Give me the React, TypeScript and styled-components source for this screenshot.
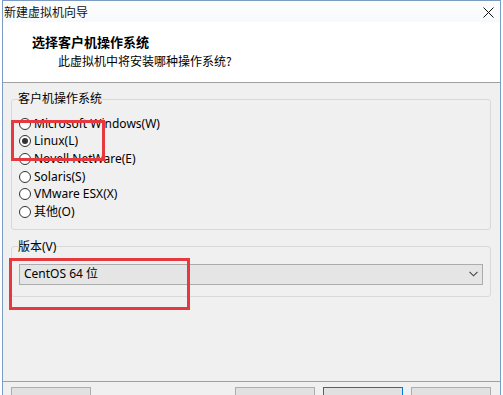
import React from "react";
import styled, { createGlobalStyle } from "styled-components";

const Global = createGlobalStyle`
  html, body { margin: 0; padding: 0; background: #ffffff; overflow: hidden; }
  body {
    font-family: "Noto Sans", "Noto Sans CJK SC", sans-serif;
    font-size: 12px;
    color: #000;
  }
`;

const Page = styled.div`
  position: relative;
  width: 503px;
  height: 395px;
  overflow: hidden;
  background: #fff;
`;

const Window = styled.div`
  margin-left: 2px;
  width: 499px;
  height: 420px;
  box-sizing: border-box;
  border: 1px solid #7d9cc4;
  border-bottom: none;
  display: flex;
  flex-direction: column;
  background: #f0f0f0;
`;

const TitleBar = styled.div`
  flex: 0 0 21px;
  display: flex;
  align-items: center;
  justify-content: space-between;
  padding: 0 6px 0 1px;
  background: linear-gradient(#fdfdfb, #f7fafc);
`;

const TitleText = styled.span`
  font-family: "Noto Sans CJK SC", sans-serif;
  font-size: 12px;
  line-height: 16px;
  color: #111;
`;

const CloseIcon = styled.svg`
  width: 11px;
  height: 11px;
  margin-top: 1px;
`;

const Header = styled.div`
  flex: 0 0 auto;
  background: #ffffff;
  padding: 11px 0 13px 29px;
  border-bottom: 1px solid #a0a0a0;
`;

const HeaderTitle = styled.div`
  font-family: "Noto Sans CJK SC", sans-serif;
  font-weight: 700;
  font-size: 13px;
  line-height: 17px;
`;

const HeaderSub = styled.div`
  font-family: "Noto Sans CJK SC", sans-serif;
  font-size: 12px;
  line-height: 16px;
  margin-top: 3px;
  padding-left: 26px;
`;

const Body = styled.div`
  flex: 1 1 auto;
  padding: 8px 9px 0 8px;
  display: flex;
  flex-direction: column;
  gap: 9px;
`;

const Group = styled.fieldset<{ $pb: number }>`
  margin: 0;
  min-width: 0;
  padding: 0 7px ${(p) => p.$pb}px 6px;
  border: 1px solid #d9d9d9;
  border-radius: 3px;
`;

const Legend = styled.legend`
  padding: 0;
  font-size: 12px;
  line-height: 16px;
  color: #000;
`;

const RadioList = styled.div`
  padding: 8px 0 0 1px;
  display: flex;
  flex-direction: column;
`;

const RadioRow = styled.label`
  height: 17.6px;
  display: flex;
  align-items: center;
  gap: 3px;
  font-size: 12px;
  line-height: 16px;
  color: #000;
`;

const RadioDot = styled.span<{ $checked: boolean }>`
  box-sizing: border-box;
  width: 12px;
  height: 12px;
  border-radius: 50%;
  border: 1px solid #333;
  background: #fff;
  display: flex;
  align-items: center;
  justify-content: center;
  &::after {
    content: "";
    width: 6px;
    height: 6px;
    border-radius: 50%;
    background: ${(p) => (p.$checked ? "#333" : "transparent")};
  }
`;

const Select = styled.div`
  margin: 9px 0 0 1px;
  box-sizing: border-box;
  height: 21px;
  border: 1px solid #acacac;
  background: #e5e5e5;
  display: flex;
  align-items: center;
  justify-content: space-between;
  padding: 0 4px 0 4px;
  font-size: 12px;
  line-height: 16px;
`;

const Chevron = styled.svg`
  width: 9px;
  height: 6px;
`;

const Footer = styled.div`
  flex: 0 0 33px;
  border-top: 1px solid #a0a0a0;
  padding: 5px 9px 0 8px;
  display: flex;
  gap: 8px;
`;

const Button = styled.div<{ $focus?: boolean }>`
  box-sizing: border-box;
  height: 26px;
  width: 80px;
  border: 1px solid ${(p) => (p.$focus ? "#0078d7" : "#adadad")};
  background: #e1e1e1;
  font-size: 12px;
  line-height: 16px;
  padding-top: 8px;
  text-align: center;
`;

const Spacer = styled.div`
  flex: 1;
`;

const Mark = styled.div`
  position: absolute;
  box-sizing: border-box;
  border: 3px solid #e5383f;
  pointer-events: none;
`;

const systems = [
  "Microsoft Windows(W)",
  "Linux(L)",
  "Novell NetWare(E)",
  "Solaris(S)",
  "VMware ESX(X)",
  "其他(O)",
];

export default function App() {
  return (
    <Page>
      <Global />
      <Window>
        <TitleBar>
          <TitleText>新建虚拟机向导</TitleText>
          <CloseIcon viewBox="0 0 11 11">
            <path d="M0.5 0.5 L10.5 10.5 M10.5 0.5 L0.5 10.5" stroke="#111" strokeWidth="1" fill="none" />
          </CloseIcon>
        </TitleBar>
        <Header>
          <HeaderTitle>选择客户机操作系统</HeaderTitle>
          <HeaderSub>此虚拟机中将安装哪种操作系统?</HeaderSub>
        </Header>
        <Body>
          <Group $pb={8}>
            <Legend>客户机操作系统</Legend>
            <RadioList>
              {systems.map((s) => (
                <RadioRow key={s}>
                  <RadioDot $checked={s === "Linux(L)"} />
                  {s}
                </RadioRow>
              ))}
            </RadioList>
          </Group>
          <Group $pb={11}>
            <Legend>版本(V)</Legend>
            <Select>
              <span>CentOS 64 位</span>
              <Chevron viewBox="0 0 9 6">
                <path d="M0.5 0.8 L4.5 4.8 L8.5 0.8" stroke="#444" strokeWidth="1.1" fill="none" />
              </Chevron>
            </Select>
          </Group>
        </Body>
        <Footer>
          <Button>帮助</Button>
          <Spacer />
          <Button>&lt; 上一步(B)</Button>
          <Button $focus>下一步(N) &gt;</Button>
          <Button>取消</Button>
        </Footer>
      </Window>
      <Mark style={{ left: 11, top: 120, width: 94, height: 41 }} />
      <Mark style={{ left: 9, top: 258, width: 181, height: 52 }} />
    </Page>
  );
}
